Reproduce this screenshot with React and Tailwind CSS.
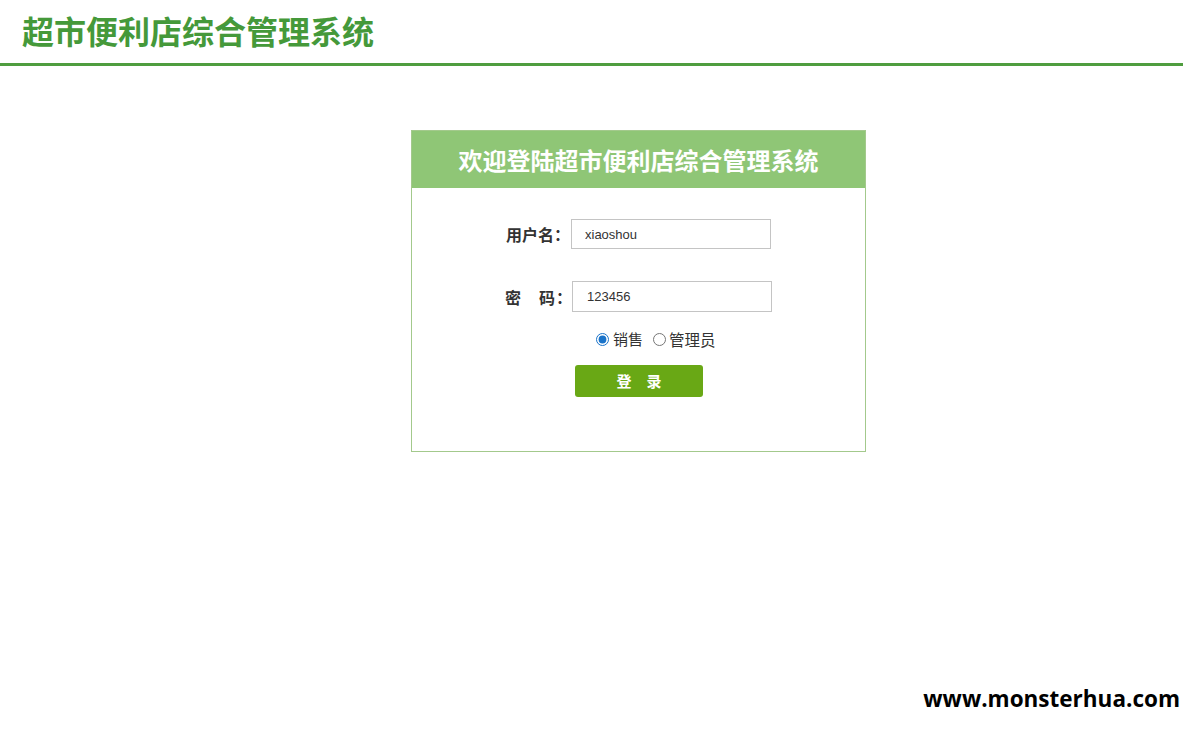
import React, { useState } from "react";

const cjk = { fontFamily: '"Microsoft YaHei", "Noto Sans CJK SC", sans-serif' };

const App = () => {
  const [username, setUsername] = useState("xiaoshou");
  const [password, setPassword] = useState("123456");
  const [role, setRole] = useState("sale");

  return (
    <div className="relative min-h-[730px] bg-white" style={cjk}>
      {/* Top title bar */}
      <header className="h-[66px] border-b-[3px] border-[#4f9d3f] pl-[22px] pt-[9px]">
        <h1 className="text-[32px] font-bold leading-[42px] text-[#45993a]">
          超市便利店综合管理系统
        </h1>
      </header>

      {/* Login card */}
      <div className="mt-[64px] w-[455px] border border-[#a3c98c] bg-white" style={{ marginLeft: 411 }}>
        <div className="flex h-[57px] items-center justify-center bg-[#8fc676]">
          <h2 className="text-[24px] font-bold text-white">欢迎登陆超市便利店综合管理系统</h2>
        </div>

        <div className="flex flex-col pb-[54px] pt-[31px]">
          <div className="flex items-center pl-[94px]">
            <span className="w-[65px] text-[16px] font-bold text-[#333]">用户名：</span>
            <input
              value={username}
              onChange={(e) => setUsername(e.target.value)}
              className="h-[30px] w-[200px] border border-[#c4c4c4] px-[13px] text-[13px] text-[#333] outline-none"
              style={{ fontFamily: '"Liberation Sans", Arial, sans-serif' }}
            />
          </div>

          <div className="mt-[32px] flex items-center pl-[93px]">
            <span className="w-[67px] whitespace-pre text-[16px] font-bold tracking-[1px] text-[#333]">密　码：</span>
            <input
              type="text"
              value={password}
              onChange={(e) => setPassword(e.target.value)}
              className="h-[31px] w-[200px] border border-[#c4c4c4] px-[14px] text-[13px] text-[#333] outline-none"
              style={{ fontFamily: '"Liberation Sans", Arial, sans-serif' }}
            />
          </div>

          <div className="mt-[16px] flex items-center pl-[184px] text-[15px] text-[#333]">
            <label className="flex items-center">
              <input
                type="radio"
                name="role"
                checked={role === "sale"}
                onChange={() => setRole("sale")}
                className="m-0 h-[13px] w-[13px] accent-[#1a73c9]"
              />
              <span className="ml-[4px]">销售</span>
            </label>
            <label className="ml-[10px] flex items-center">
              <input
                type="radio"
                name="role"
                checked={role === "admin"}
                onChange={() => setRole("admin")}
                className="m-0 h-[13px] w-[13px]"
              />
              <span className="ml-[3px] text-[15.5px]">管理员</span>
            </label>
          </div>

          <div className="mt-[14px] pl-[163px]">
            <button className="h-[32px] w-[128px] whitespace-pre rounded-[3px] bg-[#69a815] text-[15px] font-bold text-white">
              登　录
            </button>
          </div>
        </div>
      </div>

      {/* Watermark */}
      <div
        className="absolute bottom-[14px] right-[3px] text-[22.5px] font-bold text-black"
        style={{ fontFamily: '"Open Sans", sans-serif' }}
      >
        www.monsterhua.com
      </div>
    </div>
  );
};

export default App;
